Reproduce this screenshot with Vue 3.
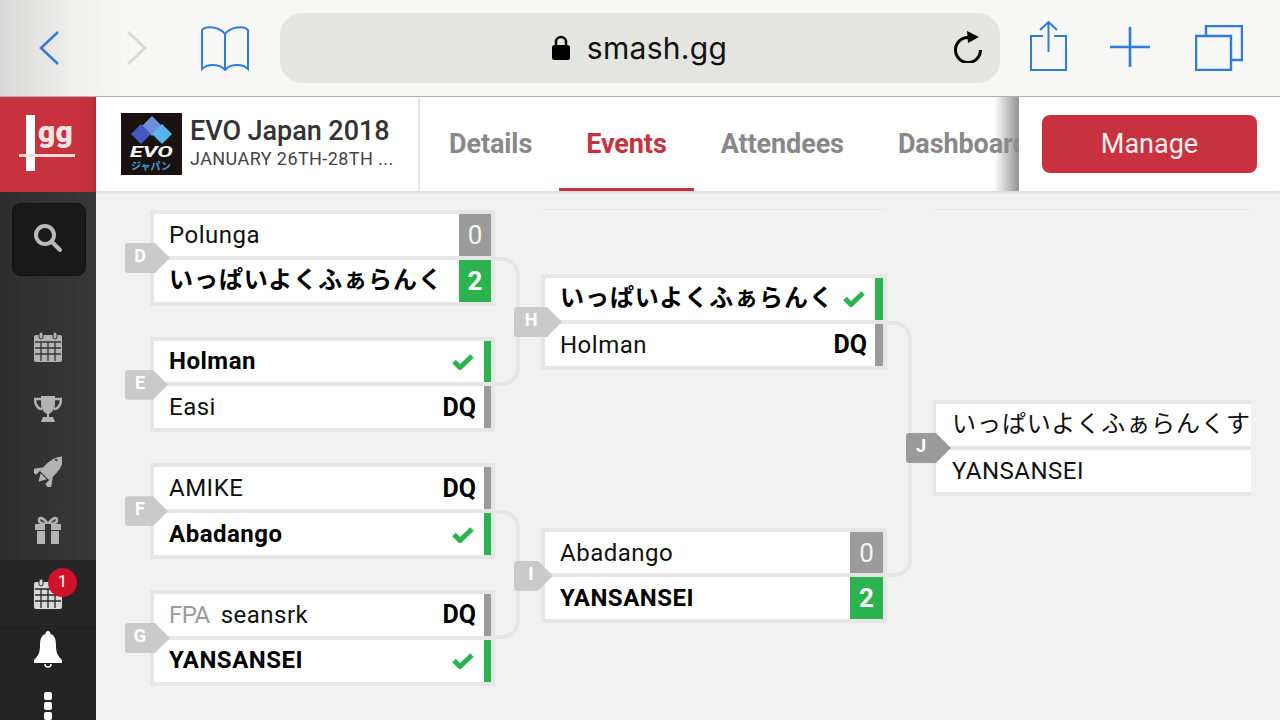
<script setup>
const columns = [
  {
    id: 'c1',
    matches: [
      { id: 'D', tagW: 45, conn: 129, players: [
        { name: 'Polunga', score: '0', kind: 'score' },
        { name: 'いっぱいよくふぁらんく', score: '2', kind: 'score', win: true },
      ] },
      { id: 'E', tagW: 43, players: [
        { name: 'Holman', kind: 'check', win: true },
        { name: 'Easi', kind: 'dq' },
      ] },
      { id: 'F', tagW: 43, conn: 129, players: [
        { name: 'AMIKE', kind: 'dq' },
        { name: 'Abadango', kind: 'check', win: true },
      ] },
      { id: 'G', tagW: 45, players: [
        { prefix: 'FPA', name: 'seansrk', kind: 'dq' },
        { name: 'YANSANSEI', kind: 'check', win: true },
      ] },
    ],
  },
  {
    id: 'c2',
    matches: [
      { id: 'H', tagW: 48, conn: 256, players: [
        { name: 'いっぱいよくふぁらんく', kind: 'check', win: true },
        { name: 'Holman', kind: 'dq' },
      ] },
      { id: 'I', tagW: 39, players: [
        { name: 'Abadango', score: '0', kind: 'score' },
        { name: 'YANSANSEI', score: '2', kind: 'score', win: true },
      ] },
    ],
  },
  {
    id: 'c3',
    matches: [
      { id: 'J', tagW: 45, final: true, players: [
        { name: 'いっぱいよくふぁらんくす', kind: 'none' },
        { name: 'YANSANSEI', kind: 'none' },
      ] },
    ],
  },
]
const tabs = ['Details', 'Events', 'Attendees', 'Dashboard']
const isKana = (s) => /[ぁ-ん]/.test(s)
</script>

<template>
  <div class="app">
    <header class="toolbar">
      <div class="tool-left">
        <svg class="i-nav" viewBox="0 0 20 34"><path d="M19 1 2 17l17 16" /></svg>
        <svg class="i-nav off" viewBox="0 0 20 34"><path d="M1 1l17 16L1 33" /></svg>
        <svg class="i-book" viewBox="0 0 50 46">
          <path d="M25 9C20 2 6 0 2 5v39c6-6 18-5 23 1 5-6 17-7 23-1V5c-4-5-18-3-23 4zM25 9v36" />
        </svg>
      </div>
      <div class="address">
        <span class="host">
          <svg class="i-lock" viewBox="0 0 20 26">
            <path d="M5 12V7a5 5 0 0 1 10 0v5" class="shackle" />
            <rect x="1" y="10" width="18" height="15" rx="2.5" />
          </svg>
          smash.gg
        </span>
        <svg class="i-reload" viewBox="0 0 30 32">
          <path d="M15 6.500A12.500 12.500 0 1 0 27.500 19" class="arc" />
          <path d="M14 0l12 6-11 6z" />
        </svg>
      </div>
      <div class="tool-right">
        <svg class="i-share" viewBox="0 0 38 50">
          <path d="M13 15H1v34h35V15H24M18.500 31V1M10 9l8.500-8L27 9" />
        </svg>
        <svg class="i-plus" viewBox="0 0 40 40"><path d="M20 0v40M0 20h40" /></svg>
        <svg class="i-tabs" viewBox="0 0 48 46">
          <path d="M1 11h35v34H1zM11 11V1h36v34H36" />
        </svg>
      </div>
    </header>

    <div class="site">
      <aside class="rail">
        <div class="logo">
          <span class="logo-gg">gg</span>
          <i class="logo-v"></i>
          <i class="logo-h"></i>
        </div>
        <nav class="side">
          <div class="search">
            <svg width="30" height="30" viewBox="0 0 30 30"><circle cx="12" cy="12" r="9" /><path d="M19 19l8 8" /></svg>
          </div>
          <div class="side-icons">
            <svg class="ico" width="28" height="30" viewBox="0 0 28 30">
              <rect y="3" width="28" height="27" rx="2" />
              <rect x="5" y="0" width="4" height="7" rx="2" class="ring" />
              <rect x="19" y="0" width="4" height="7" rx="2" class="ring" />
              <path class="grid" d="M1 10h26M1 16h26M1 22h26M7 10v19M14 10v19M21 10v19" />
            </svg>
            <svg class="ico" width="28" height="26" viewBox="0 0 28 26">
              <path d="M7 0h14v8c0 6-4 9-6 10v3h4l2 5H7l2-5h4v-3c-2-1-6-4-6-10z" />
              <path class="handle" d="M7 3H1c0 6 3 10 7 10M21 3h6c0 6-3 10-7 10" />
            </svg>
            <svg class="ico rocket" width="28" height="33" viewBox="0 0 28 33">
              <g transform="translate(12 20) rotate(45) scale(1.080)">
                <path d="M0-23c6 6 7 14 6 25H-6c-1-11 0-19 6-25z" />
                <path d="M-6-3-14 8l8-1zM6-3l8 11-8-1zM-4 3h8l-4 7z" />
              </g>
              <path d="M21 5.500l2.500 1" class="notch" />
            </svg>
            <svg class="ico gift" width="26" height="28" viewBox="0 0 26 28">
              <path class="handle" d="M13 8C9 2 4 0 4 4s5 4 9 4c4 0 9 0 9-4s-5-2-9 4z" />
              <rect y="8" width="26" height="6" />
              <rect x="2" y="15" width="22" height="13" />
              <rect x="10" y="8" width="6" height="20" class="hole" />
            </svg>
          </div>
          <div class="side-alert">
            <svg class="ico light" width="28" height="32" viewBox="0 0 28 30">
              <rect y="3" width="28" height="27" rx="2" />
              <rect x="5" y="0" width="4" height="7" rx="2" class="ring" />
              <rect x="19" y="0" width="4" height="7" rx="2" class="ring" />
              <path class="grid alt" d="M1 10h26M1 16h26M1 22h26M7 10v19M14 10v19M21 10v19" />
            </svg>
            <span class="badge">1</span>
          </div>
          <div class="side-bottom">
            <svg class="bell" width="28" height="37" viewBox="0 0 28 37">
              <path d="M14 0c-1.500 0-2.500 1-2.500 3C7 4 6 9 6 15c0 8-3 11-6 14v3h28v-3c-3-3-6-6-6-14 0-6-1-11-5.500-12 0-2-1-3-2.500-3z" />
              <path class="clap" d="M11 33a3 3 0 0 0 6 0" />
            </svg>
            <div class="dots"><i></i><i></i><i></i></div>
          </div>
        </nav>
      </aside>

      <main class="main">
        <div class="head">
          <div class="event">
            <svg class="thumb" viewBox="0 0 61 62">
              <rect width="61" height="62" fill="#1a1210" />
              <path d="M31 3l10 10-10 10-10-10z" fill="#6d8fd8" />
              <path d="M20 11l10 10-10 10-10-10z" fill="#4558c6" />
              <path d="M41 11l10 10-10 10-10-10z" fill="#5ab4ec" />
              <text x="30.500" y="44" class="t-evo" textLength="43" lengthAdjust="spacingAndGlyphs">EVO</text>
              <text x="30" y="57" class="t-jp">ジャパン</text>
            </svg>
            <div class="event-text">
              <div class="event-name">EVO Japan 2018</div>
              <div class="event-date">JANUARY 26TH-28TH ...</div>
            </div>
          </div>
          <div class="tabs">
            <a v-for="t in tabs" :key="t" class="tab" :class="{ active: t === 'Events' }">{{ t }}</a>
          </div>
          <div class="manage">
            <button class="manage-btn">Manage</button>
          </div>
        </div>

        <div class="bracket">
          <div v-for="c in columns" :key="c.id" class="col" :class="c.id">
            <div v-for="m in c.matches" :key="m.id" class="match" :class="{ final: m.final }">
              <i v-if="m.conn" class="conn" :style="{ height: m.conn + 'px' }"></i>
              <div class="tag" :class="{ dark: m.final }" :style="{ width: m.tagW + 'px' }"><span>{{ m.id }}</span></div>
              <div v-for="p in m.players" :key="p.name" class="row" :class="{ win: p.win && !m.final }">
                <span v-if="p.prefix" class="prefix">{{ p.prefix }}</span>
                <span class="name" :class="{ kana: isKana(p.name) }">{{ p.name }}</span>
                <template v-if="p.kind === 'score'">
                  <span class="score" :class="{ green: p.win }">{{ p.score }}</span>
                </template>
                <template v-if="p.kind === 'dq'">
                  <span class="dq">DQ</span>
                  <i class="bar"></i>
                </template>
                <template v-if="p.kind === 'check'">
                  <svg class="check" width="22" height="17" viewBox="0 0 22 17"><path d="M2 8.500l6 6L20 3" /></svg>
                  <i class="bar green"></i>
                </template>
              </div>
            </div>
          </div>
        </div>
      </main>
    </div>
  </div>
</template>

<style>
html, body { margin: 0; background: #f1f1f1; }
</style>

<style scoped>
.app {
  width: 1280px;
  height: 720px;
  overflow: hidden;
  display: flex;
  flex-direction: column;
  font-family: Roboto, "Noto Sans CJK JP", sans-serif;
  background: #f1f1f1;
}

/* Browser toolbar */
.toolbar {
  flex: none;
  display: flex;
  align-items: center;
  box-sizing: border-box;
  border-bottom: 1px solid #b4b4b4;
  background: linear-gradient(90deg, #d8d8d8 0, #eeeeec 70px, #f7f7f5 125px);
  height: 97px;
}
.tool-left { width: 280px; display: flex; align-items: center; padding-left: 39px; box-sizing: border-box; }
.tool-left svg, .tool-right svg { fill: none; stroke: #2f7cdc; stroke-width: 2; }
.i-nav { width: 20px; height: 34px; margin-right: 68px; stroke-width: 2.600px !important; }
.i-nav.off { stroke: #d8d8d8; margin-right: 53px; }
.i-book { width: 50px; height: 46px; }
.address {
  width: 720px;
  height: 70px;
  border-radius: 22px;
  background: #e4e4e1;
  position: relative;
  display: flex;
  align-items: center;
  justify-content: center;
}
.host {
  display: flex;
  align-items: center;
  font-size: 30px;
  color: #111;
  font-family: Inter, Roboto, sans-serif;
  gap: 16px;
  letter-spacing: 0.300px;
  margin-left: -2px;
}
.i-lock { width: 20px; height: 26px; fill: #000; }
.shackle { fill: none; stroke: #000; stroke-width: 2.500; }
.i-reload { position: absolute; right: 17px; top: 18px; width: 30px; height: 32px; fill: #000; }
.arc { fill: none; stroke: #000; stroke-width: 3; }
.tool-right { width: 280px; display: flex; align-items: center; padding-left: 30px; box-sizing: border-box; }
.i-share { width: 38px; height: 50px; margin-right: 42px; margin-top: -5px; }
.i-plus { width: 40px; height: 40px; margin-right: 45px; margin-top: -2px; stroke-width: 2.600px !important; }
.i-tabs { width: 48px; height: 46px; stroke-width: 2.400px !important; margin-top: -1px; }

/* Site */
.site { flex: 1; display: flex; min-height: 0; }
.rail { width: 96px; flex: none; display: flex; flex-direction: column; }
.logo {
  height: 95px;
  flex: none;
  position: relative;
  background: linear-gradient(90deg, #c8323e 0, #c8323e 84px, #b62e38 96px);
}
.logo-gg {
  position: absolute;
  left: 38px;
  top: 21px;
  color: #f4e4e4;
  font: 900 30px/27px Roboto, sans-serif;
  letter-spacing: 0.300px;
}
.logo-v { position: absolute; left: 26px; top: 18px; width: 9px; height: 56px; background: #fff; }
.logo-h { position: absolute; left: 19px; top: 57px; width: 56px; height: 3px; background: #f3dcdc; }

.side {
  flex: 1;
  min-height: 0;
  overflow: hidden;
  display: flex;
  flex-direction: column;
  background: linear-gradient(90deg, #2e2e2e, #373737);
}
.search {
  margin: 11px 10px 0 12px;
  height: 73px;
  flex: none;
  border-radius: 9px;
  background: #191919;
  border: 1px solid #111;
  box-sizing: border-box;
  display: flex;
  align-items: center;
  justify-content: center;
}
.search svg { fill: none; stroke: #b9b9b9; stroke-width: 4; stroke-linecap: round; margin: -3px 0 0 -3px; }
.side-icons {
  height: 284px;
  flex: none;
  display: flex;
  flex-direction: column;
  align-items: center;
  padding-top: 56px;
  box-sizing: border-box;
  gap: 34px;
}
.ico { fill: #b3b3b3; flex: none; margin-left: -1px; }
.ico.rocket { margin-top: -2px; }
.ico.gift { margin-top: -5px; }
.notch { fill: none; stroke: #333; stroke-width: 1.500; }
.ring { stroke: #333; stroke-width: 1; }
.grid { fill: none; stroke: #333; stroke-width: 1.300; }
.grid.alt { stroke: #262626; }
.handle { fill: none; stroke: #b3b3b3; stroke-width: 2.500; }
.hole { fill: #333; }
.side-alert {
  height: 65px;
  flex: none;
  background: #262626;
  position: relative;
  display: flex;
  align-items: center;
  justify-content: center;
  padding-top: 2px;
  box-sizing: border-box;
}
.ico.light { fill: #d8d8d8; }
.badge {
  position: absolute;
  left: 48px;
  top: 8px;
  width: 29px;
  height: 29px;
  border-radius: 50%;
  background: #d0112b;
  color: #fff;
  font-size: 17px;
  line-height: 27px;
  text-align: center;
}
.side-bottom {
  flex: 1;
  background: #232323;
  display: flex;
  flex-direction: column;
  align-items: center;
  padding-top: 6px;
  box-sizing: border-box;
}
.bell { fill: #fff; }
.clap { fill: none; stroke: #fff; stroke-width: 1.500; }
.dots { margin-top: 24px; display: flex; flex-direction: column; gap: 2px; }
.dots i { display: block; width: 8px; height: 8px; border-radius: 2px; background: #fff; }

/* Header */
.main { flex: 1; min-width: 0; display: flex; flex-direction: column; }
.head {
  height: 94px;
  flex: none;
  background: #fff;
  display: flex;
  box-shadow: 0 1px 3px rgba(0, 0, 0, 0.15);
  position: relative;
  z-index: 1;
}
.event {
  width: 324px;
  flex: none;
  box-sizing: border-box;
  display: flex;
  align-items: center;
  padding-left: 25px;
  padding-bottom: 3px;
  gap: 8px;
  border-right: 2px solid #e6e6e6;
}
.thumb { width: 61px; height: 62px; flex: none; margin-top: 2px; }
.t-evo { font: italic 700 14px Roboto, sans-serif; fill: #fff; text-anchor: middle; }
.t-jp { font: 700 10px "Noto Sans CJK JP", sans-serif; fill: #3fa0d8; text-anchor: middle; }
.event-text { white-space: nowrap; margin-top: -3px; }
.event-name { font-size: 27px; font-weight: 500; color: #333; line-height: 34px; letter-spacing: -0.050px; }
.event-date { font-size: 18px; color: #444; line-height: 21px; letter-spacing: 0.420px; }
.tabs { flex: 1; min-width: 0; display: flex; overflow: hidden; padding-left: 2px; }
.tab {
  padding: 0 27px;
  font-size: 27px;
  font-weight: 700;
  color: #888;
  line-height: 94px;
  white-space: nowrap;
  position: relative;
  letter-spacing: -0.100px;
}
.tab.active { color: #c8323e; }
.tab.active::after {
  content: '';
  position: absolute;
  left: 0;
  right: 0;
  bottom: -1px;
  height: 4px;
  background: #c8323e;
}
.manage {
  width: 261px;
  flex: none;
  background: #fff;
  position: relative;
  display: flex;
  align-items: center;
  padding: 0 23px;
  box-sizing: border-box;
}
.manage::before {
  content: '';
  position: absolute;
  left: -25px;
  top: 0;
  bottom: 0;
  width: 25px;
  background: linear-gradient(90deg, rgba(150, 150, 150, 0), rgba(140, 140, 140, 0.95));
}
.manage-btn {
  width: 215px;
  height: 58px;
  border: 0;
  border-radius: 8px;
  background: #c8323e;
  color: #fbeeee;
  font: 400 27px Roboto, sans-serif;
}

/* Bracket */
.bracket { flex: 1; min-height: 0; display: flex; gap: 46px; padding: 19px 0 0 54px; }
.col { position: relative; display: flex; flex-direction: column; flex: none; }
.c1 { width: 345px; gap: 31px; }
.c2 { width: 346px; padding-top: 64px; gap: 158px; }
.c3 { width: 318px; padding-top: 190px; }
.c2::before, .c3::before {
  content: '';
  position: absolute;
  left: 0;
  right: 0;
  top: -1px;
  height: 1px;
  background: #e8e8e8;
}
.match {
  position: relative;
  height: 95.670px;
  box-sizing: border-box;
  padding: 4px;
  background: #e6e6e6;
  display: flex;
  flex-direction: column;
  gap: 4px;
}
.match.final { padding-right: 0; padding-left: 3px; }
.conn {
  position: absolute;
  left: 100%;
  top: 47px;
  width: 25px;
  box-sizing: border-box;
  border: 4px solid #e6e6e6;
  border-left: 0;
  border-radius: 0 18px 18px 0;
}
.tag {
  position: absolute;
  left: -25px;
  top: 33px;
  height: 30px;
  background: #cacaca;
  border-radius: 3px;
  clip-path: polygon(0 0, calc(100% - 15px) 0, 100% 50%, calc(100% - 15px) 100%, 0 100%);
  z-index: 2;
}
.c2 .tag, .c3 .tag { left: -27px; }
.c2 .tag span { width: 34px; }
.tag.dark { background: #9b9b9b; }
.tag span {
  display: block;
  width: 30px;
  text-align: center;
  font-size: 18px;
  font-weight: 700;
  line-height: 26px;
  color: #fff;
}
.row {
  flex: 1;
  min-height: 0;
  background: #fff;
  display: flex;
  align-items: center;
  padding-left: 15px;
  font-size: 24px;
  color: #111;
  overflow: hidden;
  white-space: nowrap;
  position: relative;
  z-index: 1;
}
.final .row { padding-left: 16px; }
.row.win .name { font-weight: 700; color: #000; margin-top: -1px; }
.prefix { color: #9b9b9b; margin-right: 11px; letter-spacing: -0.600px; line-height: 30px; }
.name { flex: 1; min-width: 0; letter-spacing: 0.500px; line-height: 30px; height: 30px; }
.name.kana, .row.win .name.kana { letter-spacing: 0.950px; margin-top: -2px; }
.score {
  align-self: stretch;
  width: 32px;
  flex: none;
  background: #9b9b9b;
  color: #f4f4f4;
  font-size: 26px;
  text-align: center;
  line-height: 42px;
}
.c2 .score { width: 33px; }
.score.green { background: #2bb350; font-weight: 700; color: #fff; }
.dq { font-weight: 700; font-size: 25px; color: #000; margin-right: 8px; }
.check { fill: none; stroke: #2bb350; stroke-width: 5; margin-right: 10px; flex: none; }
.bar { align-self: stretch; width: 7px; flex: none; background: #9b9b9b; }
.c2 .bar { width: 8px; }
.bar.green { background: #2bb350; }
</style>
